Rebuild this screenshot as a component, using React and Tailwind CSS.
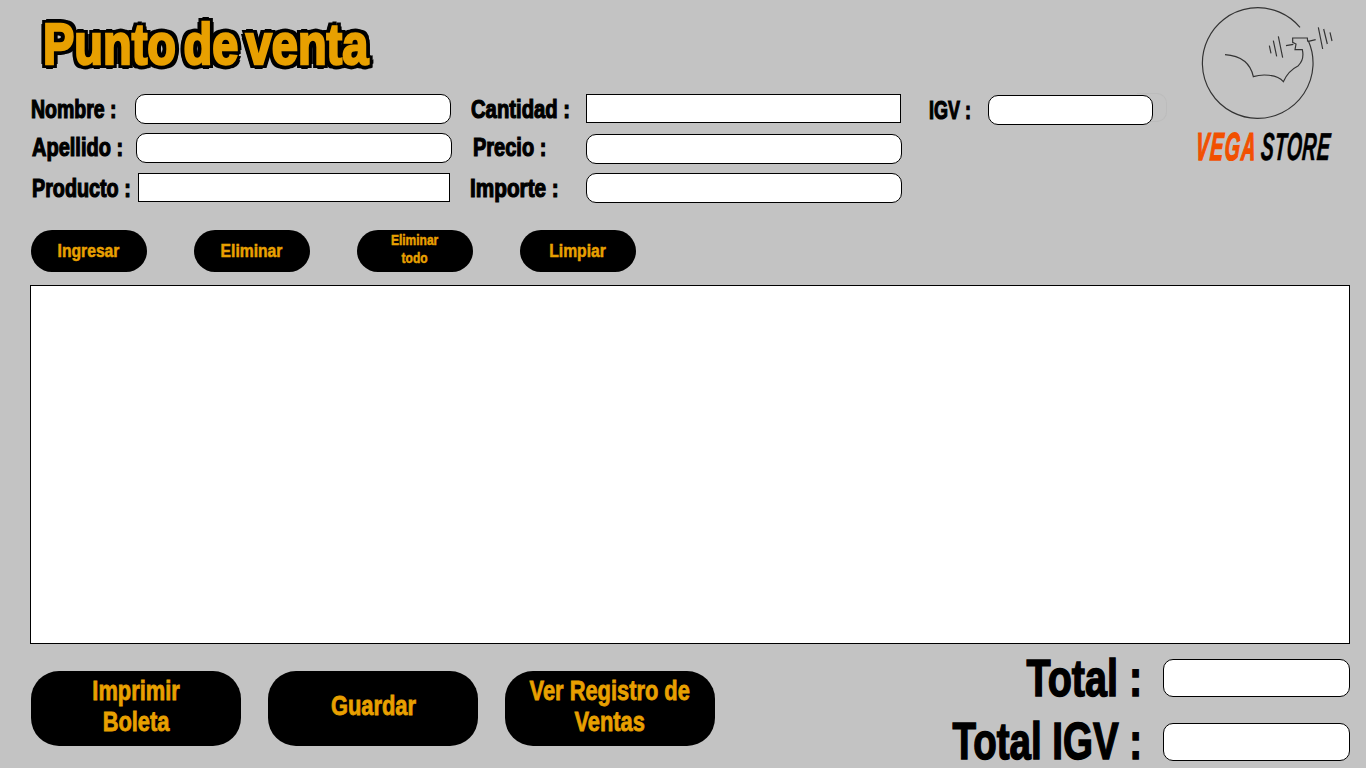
const impact = "font-['Liberation_Sans',sans-serif] font-bold whitespace-nowrap";
const rounded = "bg-white border border-black rounded-[10px] outline-none";
const square = "bg-white border border-black outline-none";

// Impact is not installed, so Liberation Sans gets squeezed horizontally
const Label = ({ children, width, className = "" }) => (
  <span className={`shrink-0 ${width}`}>
    <span className={`inline-block origin-left ${impact} text-[25px] leading-[30px] text-black [-webkit-text-stroke:1.2px_black] ${className}`}>
      {children}
    </span>
  </span>
);

const Logo = () => (
  <div className="flex flex-col items-start w-[196px] shrink-0">
    <svg className="-mt-[1px]" width="196" height="125" viewBox="0 0 588 375" fill="none" stroke="#333" strokeWidth="3.5">
      <path d="M390 85 A166 166 0 1 0 415 125" />
      <path d="M165 167 C205 170 240 185 250 233 C275 225 320 225 340 248 C350 225 365 210 385 200 C400 185 400 165 397 152 L375 152 L378 135 L368 130 L368 117 L412 117 L413 128" />
      <path d="M348 140 L370 136 M415 127 L437 122 M298 140 L303 163 M310 125 L320 172 M325 112 L338 176 M445 85 L458 150 M461 90 L472 135 M480 100 L486 126" />
    </svg>
    <div className="ml-[26px] mt-[7px] font-['Liberation_Sans',sans-serif] font-bold italic text-[39px] leading-[32px] whitespace-nowrap inline-block origin-left scale-x-[.5] -skew-x-[8deg] tracking-[3px]">
      <span className="text-[#f25000] [-webkit-text-stroke:1.5px_#f25000]">VEGA</span>
      <span className="text-black ml-[8px] tracking-[1px] [-webkit-text-stroke:0.5px_black]">STORE</span>
    </div>
  </div>
);

const PillButton = ({ children, small }) => (
  <button className={`w-[116px] h-[42px] rounded-[21px] bg-black text-[#e8a000] shrink-0 ${small ? "pb-[2px]" : ""}`}>
    <span className={`inline-block ${impact} [-webkit-text-stroke:0.5px_#e8a000] ${small ? "text-[15px] leading-[18px] scale-x-[.8]" : "text-[18px] leading-[22px] scale-x-[.87]"}`}>
      {children}
    </span>
  </button>
);

const BigButton = ({ children }) => (
  <button className="w-[210px] h-[75px] rounded-[28px] bg-black text-[#e8a000] shrink-0 pb-[6px]">
    <span className={`inline-block ${impact} text-[28px] leading-[31px] scale-x-[.78] [-webkit-text-stroke:0.8px_#e8a000]`}>
      {children}
    </span>
  </button>
);

const TotalRow = ({ label, scale, className = "" }) => (
  <div className="flex items-center justify-end gap-[21px] h-[38px]">
    <span className={`inline-block origin-right ${impact} text-[52px] leading-[38px] text-black [-webkit-text-stroke:1.5px_black] ${scale} ${className}`}>
      {label}
    </span>
    <input className={`${rounded} w-[187px] h-[38px] shrink-0`} />
  </div>
);

export default function App() {
  return (
    <div className="w-[1366px] h-[768px] bg-[#c3c3c3] overflow-hidden flex flex-col">
      <div className="flex h-[205px] shrink-0">
        <div className="w-[1170px] shrink-0">
          <h1 className={`${impact} ml-[43px] pt-[13px] h-[75px] text-[58px] leading-[62px] text-[#e8a000] origin-left scale-x-[.81] [word-spacing:-7px] [-webkit-text-stroke:2.5px_#e8a000] [text-shadow:6px_0_0_#000,-6px_0_0_#000,0_5px_0_#000,0_-5px_0_#000,5px_4px_0_#000,-5px_4px_0_#000,5px_-4px_0_#000,-5px_-4px_0_#000]`}>
            Punto de venta
          </h1>
          <div className="flex mt-[19px]">
            <div className="w-[439px] ml-[31px] shrink-0 flex flex-col">
              <div className="flex items-center h-[30px]">
                <Label width="w-[104px]" className="scale-x-[.78]">Nombre :</Label>
                <input className={`${rounded} w-[316px] h-[30px]`} />
              </div>
              <div className="flex items-center h-[30px] mt-[9px] ml-[1px]">
                <Label width="w-[104px] pb-[2px]" className="scale-x-[.8]">Apellido :</Label>
                <input className={`${rounded} w-[316px] h-[30px]`} />
              </div>
              <div className="flex items-center h-[29px] mt-[10px] ml-[1px]">
                <Label width="w-[106px]" className="scale-x-[.79]">Producto :</Label>
                <input className={`${square} w-[312px] h-[29px]`} />
              </div>
            </div>
            <div className="w-[459px] shrink-0 flex flex-col">
              <div className="flex items-center h-[29px] ml-[1px]">
                <Label width="w-[115px]" className="scale-x-[.81]">Cantidad :</Label>
                <input className={`${square} w-[315px] h-[29px]`} />
              </div>
              <div className="flex items-center h-[30px] mt-[11px] ml-[3px]">
                <Label width="w-[113px] pb-[4px]" className="scale-x-[.8]">Precio :</Label>
                <input className={`${rounded} w-[316px] h-[30px]`} />
              </div>
              <div className="flex items-center h-[30px] mt-[9px]">
                <Label width="w-[116px]" className="scale-x-[.83]">Importe :</Label>
                <input className={`${rounded} w-[316px] h-[30px]`} />
              </div>
            </div>
            <div className="relative flex items-center h-[30px] mt-[1px]">
              <Label width="w-[59px]" className="scale-x-[.72]">IGV :</Label>
              <input className={`${rounded} relative z-10 w-[165px] h-[30px]`} />
              {/* faint leftover outline behind the IGV box */}
              <div className="absolute left-[208px] -top-[2px] w-[30px] h-[29px] border-y border-r border-[#bcbcbc] rounded-r-[10px]" />
            </div>
          </div>
        </div>
        <Logo />
      </div>
      <div className="flex gap-[47px] ml-[31px] mt-[25px] shrink-0">
        <PillButton>Ingresar</PillButton>
        <PillButton>Eliminar</PillButton>
        <PillButton small>Eliminar<br />todo</PillButton>
        <PillButton>Limpiar</PillButton>
      </div>
      <div className="ml-[30px] mt-[13px] w-[1320px] h-[359px] shrink-0 bg-white border border-black" />
      <div className="flex justify-between ml-[31px] mr-[16px] mt-[15px] shrink-0">
        <div className="flex gap-[27px] mt-[12px]">
          <BigButton>Imprimir<br />Boleta</BigButton>
          <BigButton>Guardar</BigButton>
          <BigButton>Ver Registro de<br />Ventas</BigButton>
        </div>
        <div className="flex flex-col gap-[26px]">
          <TotalRow label="Total :" scale="scale-x-[.76]" />
          <TotalRow label="Total IGV :" scale="scale-x-[.74]" className="mb-[3px]" />
        </div>
      </div>
    </div>
  );
}
